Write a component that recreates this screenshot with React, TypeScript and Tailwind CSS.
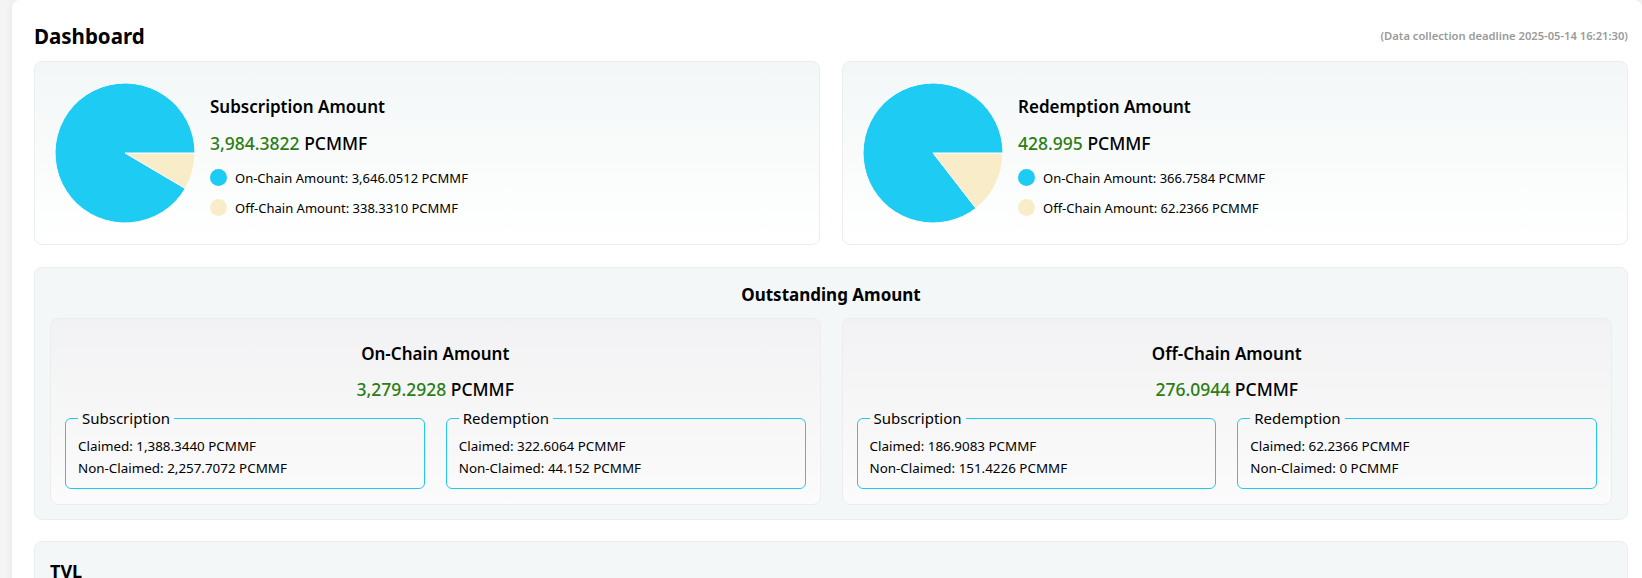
import React from "react"

const font = { fontFamily: '"Noto Sans", "Open Sans", sans-serif' }

const summary = [
  {
    title: "Subscription Amount",
    total: "3,984.3822",
    onChain: "3,646.0512",
    offChain: "338.3310",
    on: 3646.0512,
    off: 338.331,
  },
  {
    title: "Redemption Amount",
    total: "428.995",
    onChain: "366.7584",
    offChain: "62.2366",
    on: 366.7584,
    off: 62.2366,
  },
]

const outstanding = [
  {
    title: "On-Chain Amount",
    total: "3,279.2928",
    groups: [
      { label: "Subscription", claimed: "1,388.3440", nonClaimed: "2,257.7072" },
      { label: "Redemption", claimed: "322.6064", nonClaimed: "44.152" },
    ],
  },
  {
    title: "Off-Chain Amount",
    total: "276.0944",
    groups: [
      { label: "Subscription", claimed: "186.9083", nonClaimed: "151.4226" },
      { label: "Redemption", claimed: "62.2366", nonClaimed: "0" },
    ],
  },
]

const Pie = ({ on, off }: { on: number; off: number }) => {
  const a = (off / (on + off)) * Math.PI * 2
  const x = 70 + 70 * Math.cos(a)
  const y = 70 + 70 * Math.sin(a)
  return (
    <svg width="140" height="140" viewBox="0 0 140 140" className="shrink-0">
      <path d={`M70 70 L140 70 A70 70 0 0 1 ${x} ${y} Z`} fill="#f9edc9" stroke="#fff" strokeWidth="1" />
      <path d={`M70 70 L${x} ${y} A70 70 0 1 1 140 70 Z`} fill="#1ecbf2" stroke="#fff" strokeWidth="1" />
    </svg>
  )
}

const Amount = ({ value }: { value: string }) => (
  <>
    <span className="text-[#2b7d14]">{value}</span> <span className="text-black">PCMMF</span>
  </>
)

export default function App() {
  return (
    <div className="min-h-screen bg-[#f4f4f4] text-black" style={font}>
      <div className="ml-3 bg-white rounded-lg shadow-[0_0_8px_rgba(0,0,0,0.06)] pl-[22px] pr-[14px] pt-[22px]">
        <div className="flex items-center justify-between h-[28px] mb-[11px]">
          <h1 className="text-[20.5px] font-bold leading-[28px]">Dashboard</h1>
          <span className="text-[11.2px] font-semibold text-[#9a9a9a]">(Data collection deadline 2025-05-14 16:21:30)</span>
        </div>

        <div className="grid grid-cols-2 gap-[22px]">
          {summary.map((s) => (
            <div
              key={s.title}
              className="h-[184px] flex items-center pl-5 border border-[#eaeeee] rounded-lg bg-linear-to-b from-[#f3f7f7] to-white"
            >
              <Pie on={s.on} off={s.off} />
              <div className="ml-[15px] pt-[6px]">
                <div className="text-[17px] font-semibold leading-[24px]">{s.title}</div>
                <div className="text-[17.5px] font-medium leading-[26px] mt-[11px]">
                  <Amount value={s.total} />
                </div>
                <div className="flex items-center gap-2 text-[13px] leading-[20px] mt-[12px]">
                  <span className="w-[17px] h-[17px] rounded-full bg-[#1ecbf2]" />
                  On-Chain Amount: {s.onChain} PCMMF
                </div>
                <div className="flex items-center gap-2 text-[13px] leading-[20px] mt-[10px]">
                  <span className="w-[17px] h-[17px] rounded-full bg-[#f9edc9]" />
                  Off-Chain Amount: {s.offChain} PCMMF
                </div>
              </div>
            </div>
          ))}
        </div>

        <div className="mt-[22px] border border-[#eaeeee] rounded-lg bg-[#f4f7f7] px-[15px] pt-[15px] pb-[14px]">
          <div className="text-center text-[17px] font-bold leading-[24px]">Outstanding Amount</div>
          <div className="grid grid-cols-2 gap-[21px] mt-[11px]">
            {outstanding.map((o) => (
              <div
                key={o.title}
                className="border border-[#ecedef] rounded-lg bg-linear-to-b from-[#f2f2f4] to-[#fbfbfb] px-[14px] pt-[23px] pb-[15px]"
              >
                <div className="text-center text-[17px] font-semibold leading-[24px]">{o.title}</div>
                <div className="text-center text-[17.5px] font-medium leading-[26px] mt-[10px]">
                  <Amount value={o.total} />
                </div>
                <div className="grid grid-cols-2 gap-[21px] mt-[6px]">
                  {o.groups.map((g) => (
                    <fieldset key={g.label} className="border border-[#22c8ee] rounded-md pl-3 pb-[10px]">
                      <legend className="px-1 text-[15px] leading-[20px]">{g.label}</legend>
                      <div className="text-[13.4px] leading-[20px] mt-[8px]">Claimed: {g.claimed} PCMMF</div>
                      <div className="text-[13.4px] leading-[20px] mt-[2px]">Non-Claimed: {g.nonClaimed} PCMMF</div>
                    </fieldset>
                  ))}
                </div>
              </div>
            ))}
          </div>
        </div>

        <div className="mt-[21px] h-[200px] border border-[#eaeeee] rounded-lg bg-[#f4f7f7] px-[15px] pt-[17px]">
          <div className="text-[18px] font-bold leading-[24px]">TVL</div>
        </div>
      </div>
    </div>
  )
}
